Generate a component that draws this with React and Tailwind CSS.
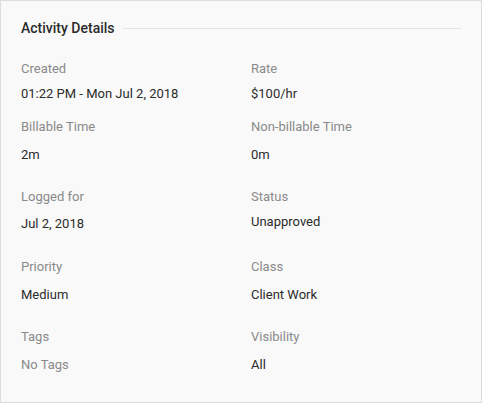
const rows = [
  { gapTop: 'mt-[21px]', inner: 'mt-[5px]', left: ['Created', '01:22 PM - Mon Jul 2, 2018'], right: ['Rate', '$100/hr'] },
  { gapTop: 'mt-[13px]', inner: 'mt-2', left: ['Billable Time', '2m'], right: ['Non-billable Time', '0m'] },
  { gapTop: 'mt-[22px]', inner: 'mt-[7px]', left: ['Logged for', 'Jul 2, 2018'], right: ['Status', 'Unapproved'], rightInner: 'mt-[5px]' },
  { gapTop: 'mt-[23px]', inner: 'mt-2', left: ['Priority', 'Medium'], right: ['Class', 'Client Work'] },
  { gapTop: 'mt-[22px]', inner: 'mt-2', left: ['Tags', 'No Tags'], right: ['Visibility', 'All'], leftMuted: true },
];

const Field = ({ label, value, inner, muted }) => (
  <div>
    <div className="text-[13px] leading-5 text-[#8a8a8a]">{label}</div>
    <div className={`${inner} text-[13px] leading-5 ${muted ? 'text-[#8a8a8a]' : 'text-[#2b2b2b]'}`}>{value}</div>
  </div>
);

export default function App() {
  return (
    <div className="w-[482px] h-[403px] bg-[#f9f9f9] border border-[#dcdcdc] pl-[20px] pr-[20px] font-['Roboto',sans-serif]">
      {/* Header */}
      <div className="flex items-center gap-[8px] mt-[17px] h-5">
        <h2 className="text-[14px] font-medium leading-5 text-[#2b2b2b]">Activity Details</h2>
        <div className="flex-1 h-px bg-[#e4e4e4]" />
      </div>

      {rows.map((r, i) => (
        <div key={i} className={`grid grid-cols-[230px_1fr] ${r.gapTop}`}>
          <Field label={r.left[0]} value={r.left[1]} inner={r.inner} muted={r.leftMuted} />
          <Field label={r.right[0]} value={r.right[1]} inner={r.rightInner || r.inner} />
        </div>
      ))}
    </div>
  );
}
